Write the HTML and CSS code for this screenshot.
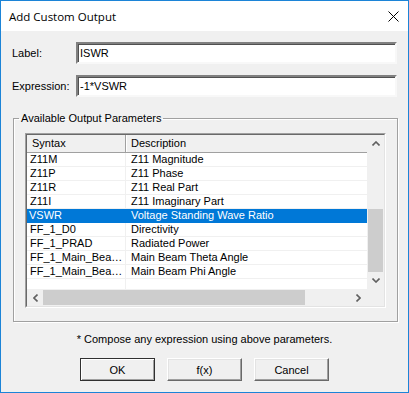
FILE: index.html
```html
<!DOCTYPE html>
<html lang="en">
<head>
    <meta charset="UTF-8">
    <meta name="viewport" content="width=device-width, initial-scale=1.0">
    <title>Add Custom Output</title>
    <link rel="stylesheet" href="styles.css">
</head>
<body>
    <div class="window">
        <div class="titlebar">
            <span class="title">Add Custom Output</span>
            <svg class="close" width="11" height="11" viewBox="0 0 11 11">
                <path d="M0.5 0.5 L10.5 10.5 M10.5 0.5 L0.5 10.5" stroke="#000" stroke-width="1" fill="none"/>
            </svg>
        </div>
        <div class="content">
            <div class="field">
                <label for="label-input">Label:</label>
                <input type="text" id="label-input" class="text-input" value="ISWR">
            </div>
            <div class="field">
                <label for="expr-input">Expression:</label>
                <input type="text" id="expr-input" class="text-input" value="-1*VSWR">
            </div>

            <fieldset class="group">
                <legend>Available Output Parameters</legend>
                <div class="list">
                    <div class="list-inner">
                        <div class="table">
                            <div class="row head">
                                <div class="cell c1">Syntax</div>
                                <div class="cell c2">Description</div>
                            </div>
                            <div class="row"><div class="cell c1">Z11M</div><div class="cell c2">Z11 Magnitude</div></div>
                            <div class="row"><div class="cell c1">Z11P</div><div class="cell c2">Z11 Phase</div></div>
                            <div class="row"><div class="cell c1">Z11R</div><div class="cell c2">Z11 Real Part</div></div>
                            <div class="row"><div class="cell c1">Z11I</div><div class="cell c2">Z11 Imaginary Part</div></div>
                            <div class="row selected"><div class="cell c1">VSWR</div><div class="cell c2">Voltage Standing Wave Ratio</div></div>
                            <div class="row"><div class="cell c1">FF_1_D0</div><div class="cell c2">Directivity</div></div>
                            <div class="row"><div class="cell c1">FF_1_PRAD</div><div class="cell c2">Radiated Power</div></div>
                            <div class="row"><div class="cell c1">FF_1_Main_Bea…</div><div class="cell c2">Main Beam Theta Angle</div></div>
                            <div class="row"><div class="cell c1">FF_1_Main_Bea…</div><div class="cell c2">Main Beam Phi Angle</div></div>
                            <div class="row"><div class="cell c1"></div><div class="cell c2"></div></div>
                        </div>
                        <div class="vscroll">
                            <div class="arrow">
                                <svg width="8" height="5" viewBox="0 0 8 5"><path d="M0.5 4.5 L4 1 L7.5 4.5" stroke="#606060" stroke-width="1.6" fill="none"/></svg>
                            </div>
                            <div class="track"><div class="thumb"></div></div>
                            <div class="arrow">
                                <svg width="8" height="5" viewBox="0 0 8 5"><path d="M0.5 0.5 L4 4 L7.5 0.5" stroke="#606060" stroke-width="1.6" fill="none"/></svg>
                            </div>
                        </div>
                        <div class="hscroll">
                            <div class="arrow">
                                <svg width="5" height="8" viewBox="0 0 5 8"><path d="M4.5 0.5 L1 4 L4.5 7.5" stroke="#606060" stroke-width="1.6" fill="none"/></svg>
                            </div>
                            <div class="track"><div class="thumb"></div></div>
                            <div class="arrow">
                                <svg width="5" height="8" viewBox="0 0 5 8"><path d="M0.5 0.5 L4 4 L0.5 7.5" stroke="#606060" stroke-width="1.6" fill="none"/></svg>
                            </div>
                        </div>
                        <div class="corner"></div>
                    </div>
                </div>
            </fieldset>

            <p class="note">* Compose any expression using above parameters.</p>

            <div class="buttons">
                <button class="btn default">OK</button>
                <button class="btn">f(x)</button>
                <button class="btn">Cancel</button>
            </div>
        </div>
    </div>
</body>
</html>
```

FILE: styles.css
```css
body {
    margin: 0;
    padding: 0;
    font-family: "Liberation Sans", Arial, sans-serif;
    font-size: 11px;
    color: #000;
    background: #fff;
}
.window {
    width: 409px;
    height: 393px;
    box-sizing: border-box;
    border: 1px solid #1c84d7;
    background: #f0f0f0;
    display: flex;
    flex-direction: column;
}
.titlebar {
    height: 30px;
    background: #fff;
    display: flex;
    align-items: center;
    justify-content: space-between;
    padding: 0 9px 0 8px;
}
.title {
    font-family: "Open Sans", sans-serif;
    font-size: 11.5px;
    margin-top: 1px;
}
.close {
    display: block;
    margin-top: 1px;
}
.content {
    padding: 11px 11px 11px 11px;
    display: flex;
    flex-direction: column;
}
.field {
    display: flex;
    align-items: center;
    height: 22px;
}
.field + .field {
    margin-top: 11px;
}
.field label {
    width: 64px;
}
.text-input {
    flex: 1;
    height: 22px;
    box-sizing: border-box;
    margin: 0;
    padding: 0 2px;
    font-family: inherit;
    font-size: 11px;
    color: #000;
    background: #fff;
    border: 2px solid;
    border-color: #808080 #f8f8f8 #f8f8f8 #808080;
    box-shadow: inset 1px 1px 0 #505050;
    outline: none;
}
.group {
    margin: 15px -1px 0 1px;
    padding: 8px 11px 13px 11px;
    border: 1px solid #a0a0a0;
    box-shadow: inset 1px 1px 0 #fff, 1px 1px 0 #fff;
    min-width: 0;
}
.group legend {
    margin-left: -6px;
    padding: 0 2px;
    line-height: 13px;
}
.list {
    height: 175px;
    box-sizing: border-box;
    border: 1px solid;
    border-color: #a0a0a0 #fff #fff #a0a0a0;
}
.list-inner {
    height: 100%;
    box-sizing: border-box;
    border: 1px solid;
    border-color: #696969 #e3e3e3 #e3e3e3 #696969;
    background: #fff;
    display: grid;
    grid-template-columns: 1fr 17px;
    grid-template-rows: 1fr 17px;
}
.table {
    overflow: hidden;
    min-width: 0;
}
.row {
    display: flex;
    width: 400px;
    height: 14px;
    box-sizing: border-box;
    border-bottom: 1px solid #f0f0f0;
    line-height: 13px;
    white-space: nowrap;
}
.cell {
    box-sizing: border-box;
    overflow: hidden;
}
.c1 {
    width: 99px;
    padding-left: 3px;
    border-right: 1px solid #f0f0f0;
}
.c2 {
    flex: 1;
    padding-left: 5px;
}
.row.head {
    height: 18px;
    line-height: 17px;
    background: #f0f0f0;
    border-bottom: 1px solid #a0a0a0;
}
.row.head .c1 {
    padding-left: 5px;
    border-right: 1px solid #a0a0a0;
    box-shadow: 1px 0 0 #fff;
}
.row.head .c2 {
    padding-left: 5px;
}
.row.selected {
    background: #0078d7;
    color: #fff;
    border-bottom-color: #0078d7;
}
.row.selected .c1 {
    border-right-color: #0078d7;
    padding-left: 2px;
}
.vscroll {
    background: #f0f0f0;
    display: flex;
    flex-direction: column;
}
.vscroll .arrow {
    height: 17px;
    display: flex;
    align-items: center;
    justify-content: center;
}
.vscroll .track {
    flex: 1;
}
.vscroll .thumb {
    margin: 57px 1px 0 1px;
    height: 63px;
    background: #cdcdcd;
}
.hscroll {
    background: #f0f0f0;
    display: flex;
}
.hscroll .arrow {
    width: 17px;
    display: flex;
    align-items: center;
    justify-content: center;
}
.hscroll .track {
    flex: 1;
}
.hscroll .thumb {
    margin: 1px 0 1px -1px;
    width: 262px;
    height: 15px;
    background: #cdcdcd;
}
.corner {
    background: #f0f0f0;
}
.note {
    margin: 11px 0 0 0;
    line-height: 13px;
    text-align: center;
}
.buttons {
    margin-top: 12px;
    display: flex;
    justify-content: center;
    gap: 12px;
}
.btn {
    width: 75px;
    height: 23px;
    margin: 0;
    padding: 0;
    font-family: inherit;
    font-size: 11px;
    color: #000;
    background: #f0f0f0;
    border: 1px solid;
    border-color: #fff #696969 #696969 #fff;
    box-shadow: inset -1px -1px 0 #a0a0a0, inset 1px 1px 0 #e3e3e3;
}
.btn.default {
    border-color: #303030;
    box-shadow: inset 1px 1px 0 #fff, inset -1px -1px 0 #a0a0a0;
}
```
